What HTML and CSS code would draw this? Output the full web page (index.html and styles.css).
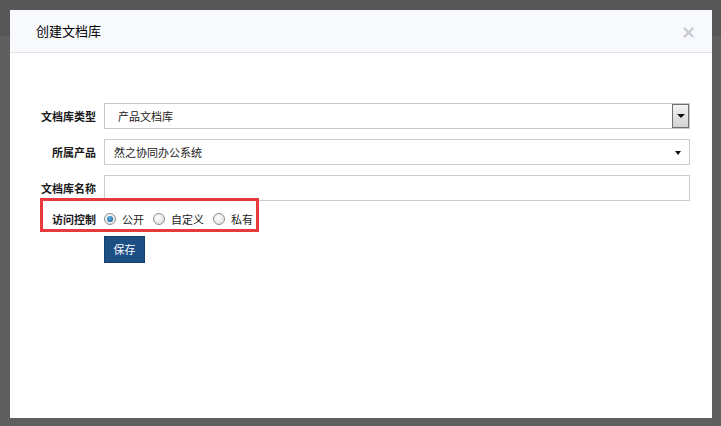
FILE: index.html
```
<html>
<head>
    <title>创建文档库</title>
    <link rel="stylesheet" href="styles.css">
</head>
<body>
    <div class="backdrop-top"></div>
    <div class="modal">
        <div class="modal-header">
            <h4>创建文档库</h4>
            <span class="close">&times;</span>
        </div>
        <div class="modal-body">
            <div class="form-row">
                <label>文档库类型</label>
                <div class="control select-win">
                    <span>产品文档库</span>
                    <span class="win-btn"><i class="caret"></i></span>
                </div>
            </div>
            <div class="form-row">
                <label>所属产品</label>
                <div class="control select-chosen">
                    <span>然之协同办公系统</span>
                    <i class="caret"></i>
                </div>
            </div>
            <div class="form-row">
                <label>文档库名称</label>
                <div class="control"></div>
            </div>
            <div class="form-row radio-row">
                <label>访问控制</label>
                <div class="radios">
                    <span class="radio checked"></span><span class="radio-text">公开</span>
                    <span class="radio"></span><span class="radio-text">自定义</span>
                    <span class="radio"></span><span class="radio-text">私有</span>
                </div>
                <div class="highlight"></div>
            </div>
            <div class="form-row">
                <label></label>
                <button class="btn-save">保存</button>
            </div>
        </div>
    </div>
</body>
</html>
```
FILE: styles.css
```
* { margin: 0; padding: 0; box-sizing: border-box; }
body { background: #5f5f5f; font-family: "Noto Sans CJK SC", "Liberation Sans", sans-serif; font-size: 11px; color: #222; width: 721px; height: 426px; overflow: hidden; position: relative; }
.backdrop-top { height: 36px; background: #565656; border-bottom: 1px solid #595959; position: absolute; left: 0; right: 0; top: 0; }
.modal { position: absolute; left: 10px; top: 10px; width: 702px; height: 408px; background: #fff; }
.modal-header { height: 43px; background: #f7f9fd; border-bottom: 1px solid #e2e4e6; display: flex; align-items: center; justify-content: space-between; padding: 0 16px 0 26px; }
.modal-header h4 { font-size: 13px; font-weight: normal; color: #000; margin-top: -2px; }
.close { color: #c6cad2; font-size: 18px; font-weight: bold; font-family: "DejaVu Sans", sans-serif; margin-top: 1px; }
.modal-body { padding-top: 50px; }
.form-row { display: flex; align-items: center; height: 26px; margin-bottom: 10px; position: relative; }
.form-row label { width: 86px; text-align: right; font-weight: bold; font-size: 11px; margin-right: 8px; color: #1a1a1a; }
.control { width: 586px; height: 26px; border: 1px solid #ccc; display: flex; align-items: center; padding-left: 12px; position: relative; color: #222; }
.select-win { padding-left: 13px; border-color: #c8c8c8; }
.win-btn { position: absolute; right: 0; top: 0; bottom: 0; width: 17px; border: 1px solid #707070; background: linear-gradient(#f2f2f2, #d4d4d4); display: flex; align-items: center; justify-content: center; }
.caret { display: inline-block; width: 0; height: 0; border-left: 4px solid transparent; border-right: 4px solid transparent; border-top: 4px solid #111; }
.select-chosen { padding-left: 9px; }
.select-chosen .caret { position: absolute; right: 8px; top: 11px; border-left-width: 3px; border-right-width: 3px; }
.radio-row { margin-top: -4px; height: 24px; margin-bottom: 5px; }
.radios { display: flex; align-items: center; }
.radio { width: 12px; height: 12px; border-radius: 50%; border: 1px solid #8e8f8f; background: radial-gradient(circle at 40% 35%, #fff, #d8d8d8); margin-right: 6px; position: relative; }
.radio.checked::after { content: ""; position: absolute; left: 2px; top: 2px; width: 6px; height: 6px; border-radius: 50%; background: radial-gradient(circle at 40% 35%, #5fb2e8, #12548a); }
.radio-text { margin-right: 9px; color: #222; }
.highlight { position: absolute; left: 30px; top: -9px; width: 219px; height: 34px; border: 3px solid #e83a3c; }
.btn-save { width: 41px; height: 27px; background: #1c4f84; border: 1px solid #163f6b; color: #fff; font-family: "Noto Sans CJK SC", sans-serif; font-size: 11px; }
```
